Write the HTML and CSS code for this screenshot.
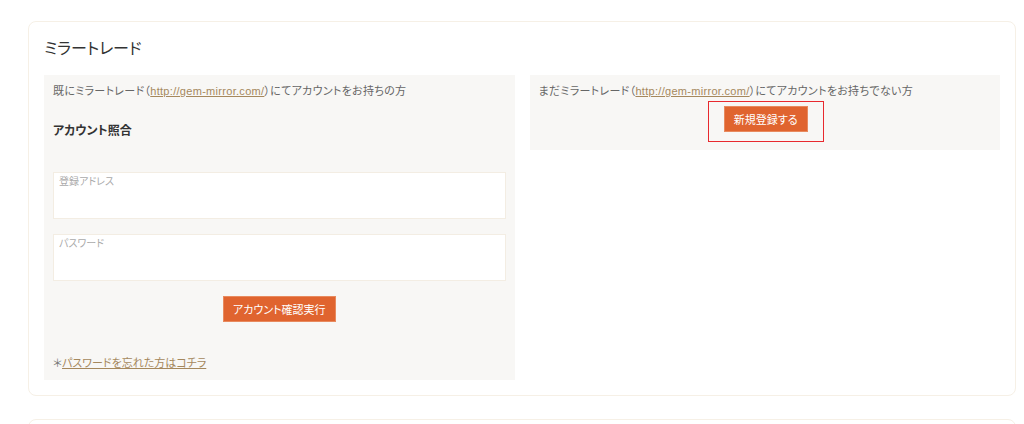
FILE: index.html
```html
<!DOCTYPE html>
<html lang="ja"><head>
	<meta charset="utf-8" />
	<meta name="viewport" content="width=device-width, initial-scale=1.0" />
	<title>ミラートレード</title>
	<link rel="stylesheet" href="styles.css">
</head><body>
	<section class="card">
		<h2 class="card-title">ミラートレード</h2>
		<div class="columns">
			<div class="panel panel--login">
				<p class="panel-text">既にミラートレード（<a href="#">http://gem-mirror.com/</a>）にてアカウントをお持ちの方</p>
				<h3 class="panel-heading">アカウント照合</h3>
				<form class="login-form">
					<input class="field" type="text" placeholder="登録アドレス">
					<input class="field" type="password" placeholder="パスワード">
					<div class="btn-row">
						<button class="btn" type="button">アカウント確認実行</button>
					</div>
				</form>
				<p class="forgot">＊<a href="#">パスワードを忘れた方はコチラ</a></p>
			</div>
			<div class="panel panel--signup">
				<p class="panel-text">まだミラートレード（<a href="#">http://gem-mirror.com/</a>）にてアカウントをお持ちでない方</p>
				<div class="btn-row">
					<span class="highlight"><button class="btn" type="button">新規登録する</button></span>
				</div>
			</div>
		</div>
	</section>
	<section class="card card--next"></section>
</body></html>
```

FILE: styles.css
```css
body {
	margin: 0;
	padding: 21px 8px 0 28px;
	font-family: "Liberation Sans", "Noto Sans CJK JP", sans-serif;
	font-feature-settings: "palt";
	color: #666;
	background: #fff;
	overflow: hidden;
}
a { color: #a5885d; }
.card {
	border: 1px solid #f6f0e6;
	border-radius: 8px;
	padding: 14px 15px 15px;
}
.card--next {
	margin-top: 23px;
	height: 60px;
}
.card-title {
	margin: 1px 0 14px;
	font-size: 16px;
	line-height: 24px;
	font-weight: normal;
	color: #333;
}
.columns {
	display: grid;
	grid-template-columns: 1fr 1fr;
	gap: 15px;
	align-items: start;
}
.panel {
	background: #f8f7f5;
	padding: 8px 9px;
}
.panel-text {
	margin: 0;
	font-size: 11px;
	line-height: 17px;
	letter-spacing: 0.3px;
}
.panel-heading {
	margin: 23px 0 0;
	font-size: 12px;
	line-height: 17px;
	color: #333;
}
.login-form {
	display: flex;
	flex-direction: column;
	gap: 15px;
	margin-top: 32px;
}
.field {
	box-sizing: border-box;
	width: 100%;
	height: 47px;
	margin: 0;
	padding: 1px 5px 30px;
	border: 1px solid #f3ede3;
	background: #fff;
	font: 10px "Liberation Sans", "Noto Sans CJK JP", sans-serif;
	font-feature-settings: "palt";
	color: #333;
}
.field::placeholder { color: #aaa; }
.btn-row {
	display: flex;
	justify-content: center;
}
.btn {
	height: 26px;
	padding: 0 9px;
	border: 1px solid #e88a5e;
	background: #e0642f;
	color: #fff;
	font: 11px "Liberation Sans", "Noto Sans CJK JP", sans-serif;
	font-feature-settings: "palt";
}
.forgot {
	margin: 33px 0 0;
	font-size: 11px;
	line-height: 17px;
	color: #777;
}
.panel--signup {
	padding-bottom: 8px;
}
.highlight {
	display: inline-block;
	margin: 1px 0 0 2px;
	padding: 4px 15px 9px;
	border: 1px solid #e8292e;
	line-height: 0;
}
```
